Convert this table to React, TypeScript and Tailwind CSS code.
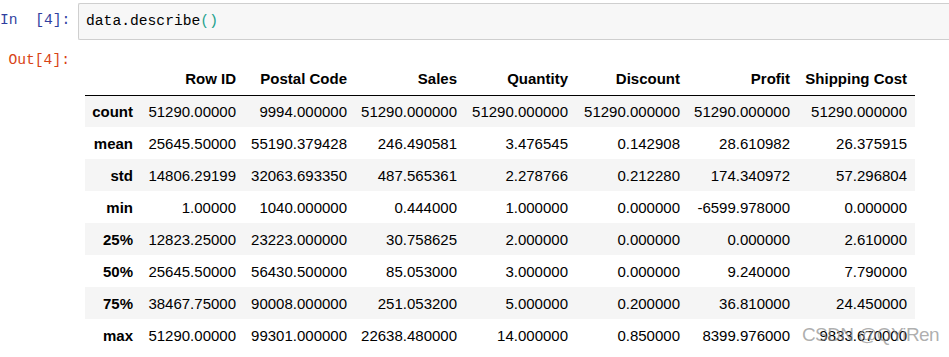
const COLUMNS = ["Row ID", "Postal Code", "Sales", "Quantity", "Discount", "Profit", "Shipping Cost"];

// widths measured from the notebook output, index column first
const COL_WIDTHS = [56, 103, 111, 110, 111, 112, 110, 117];

const ROWS: Array<{ label: string; values: string[] }> = [
  { label: "count", values: ["51290.00000", "9994.000000", "51290.000000", "51290.000000", "51290.000000", "51290.000000", "51290.000000"] },
  { label: "mean", values: ["25645.50000", "55190.379428", "246.490581", "3.476545", "0.142908", "28.610982", "26.375915"] },
  { label: "std", values: ["14806.29199", "32063.693350", "487.565361", "2.278766", "0.212280", "174.340972", "57.296804"] },
  { label: "min", values: ["1.00000", "1040.000000", "0.444000", "1.000000", "0.000000", "-6599.978000", "0.000000"] },
  { label: "25%", values: ["12823.25000", "23223.000000", "30.758625", "2.000000", "0.000000", "0.000000", "2.610000"] },
  { label: "50%", values: ["25645.50000", "56430.500000", "85.053000", "3.000000", "0.000000", "9.240000", "7.790000"] },
  { label: "75%", values: ["38467.75000", "90008.000000", "251.053200", "5.000000", "0.200000", "36.810000", "24.450000"] },
  { label: "max", values: ["51290.00000", "99301.000000", "22638.480000", "14.000000", "0.850000", "8399.976000", "9833.670000"] },
];

export default function App() {
  return (
    <div className="relative h-[357px] w-[949px] overflow-hidden bg-white pt-[3px]">
      {/* input cell */}
      <div className="flex">
        <div className="w-[78px] shrink-0 pt-[9px] font-['Liberation_Mono',monospace] text-[14.67px] leading-[17px] text-[#303f9f] whitespace-pre">
          {"In  [4]:"}
        </div>
        <div className="h-[37px] flex-1 rounded-l-[2px] border border-r-0 border-[#cfcfcf] bg-[#f7f7f7] pl-[7px] pt-[8px] font-['Liberation_Mono',monospace] text-[14.67px] leading-[19px] text-black">
          data.describe<span className="text-[#22a08c]">()</span>
        </div>
      </div>

      {/* output cell */}
      <div className="mt-[12px] flex">
        <div className="w-[78px] shrink-0 pr-[8px] text-right font-['Liberation_Mono',monospace] text-[14.67px] leading-[17px] text-[#d84315]">
          Out[4]:
        </div>
        <div className="pl-[7px] pt-[11px]">
          <table className="w-[830px] table-fixed border-collapse font-['Liberation_Sans',Arial,sans-serif] text-[15px] text-black">
            <colgroup>
              {COL_WIDTHS.map((w, i) => (
                <col key={i} style={{ width: w }} />
              ))}
            </colgroup>
            <thead>
              <tr className="h-[32px] border-b border-black">
                <th className="p-0 pr-[8px]" />
                {COLUMNS.map((c) => (
                  <th key={c} className="whitespace-nowrap p-0 pr-[8px] text-right font-bold leading-[17px]">
                    {c}
                  </th>
                ))}
              </tr>
            </thead>
            <tbody>
              {ROWS.map((row, i) => (
                <tr key={row.label} className={`h-[32px] ${i % 2 === 0 ? "bg-[#f5f5f5]" : "bg-white"}`}>
                  <th className="whitespace-nowrap p-0 pr-[8px] text-right font-bold leading-[17px]">{row.label}</th>
                  {row.values.map((v, j) => (
                    <td key={j} className="whitespace-nowrap p-0 pr-[8px] text-right leading-[17px]">
                      {v}
                    </td>
                  ))}
                </tr>
              ))}
            </tbody>
          </table>
        </div>
      </div>

      {/* blog watermark */}
      <div className="pointer-events-none absolute left-[802px] top-[324px] font-['Liberation_Sans',Arial,sans-serif] text-[19px] leading-[22px] tracking-[-0.6px] text-[#8c8c8c]/70 whitespace-nowrap">
        CSDN @QYiRen
      </div>
    </div>
  );
}
